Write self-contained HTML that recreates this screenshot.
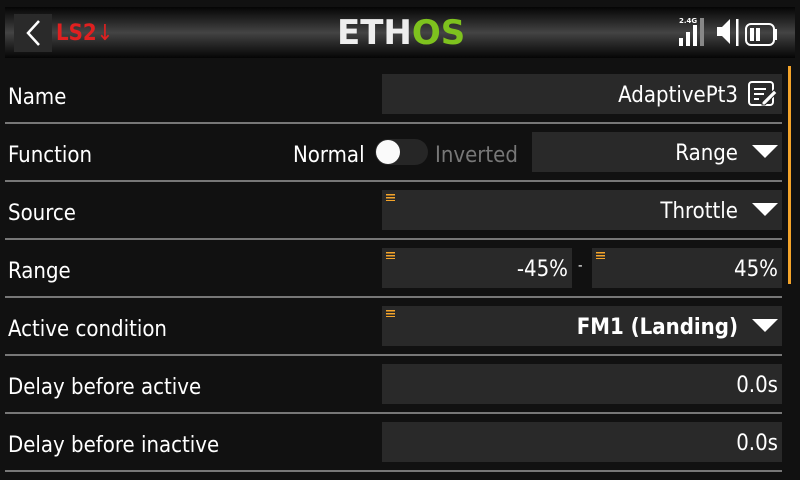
<!DOCTYPE html>
<html><head><style>
*{margin:0;padding:0;box-sizing:border-box}
body{width:800px;height:480px;background:#111;overflow:hidden;position:relative;font-family:"DejaVu Sans Condensed","DejaVu Sans",sans-serif;color:#fff;font-size:22px}
.hdr{position:absolute;left:5px;top:7px;width:790px;height:51px;background:linear-gradient(#050505,#2a2a2a 30%,#444 50%,#2a2a2a 70%,#050505)}
.back{position:absolute;left:14px;top:14px;width:38px;height:38px;background:#2a2a2a}
.sep{position:absolute;left:5px;width:777px;height:2px;background:#777}
.lbl{position:absolute;left:8px;height:40px;line-height:44px}
.fld{position:absolute;background:#292929;height:40px;line-height:43px;text-align:right;padding-right:4px}
.tri{display:inline-block;width:0;height:0;border-left:13px solid transparent;border-right:13px solid transparent;border-top:13px solid #fff;margin-left:14px;vertical-align:middle;position:relative;top:-3px}
.ham{position:absolute;left:4px;top:4px;width:9px;height:7px;background:repeating-linear-gradient(#f4a42a 0 1.5px,transparent 1.5px 3px)}
</style></head><body>
<div class="hdr"></div>
<div class="back"><svg width="38" height="38"><path d="M25 7 L14 19 L25 31" stroke="#fff" stroke-width="2.5" fill="none"/></svg></div>
<div style="position:absolute;left:56px;top:19px;color:#e02020;font-weight:bold;font-size:22px;line-height:30px">LS2<span style="font-weight:normal">↓</span></div>
<div style="position:absolute;left:337px;top:14px;font-family:'DejaVu Sans',sans-serif;font-weight:bold;font-size:34px;line-height:38px;color:#eee">ETH<span style="color:#7ec21e">OS</span></div>
<svg style="position:absolute;left:676px;top:16px" width="110" height="34">
<text x="3" y="7" fill="#fff" font-size="7" font-family="DejaVu Sans" font-weight="bold">2.4G</text>
<rect x="3" y="22" width="4" height="8" fill="#fff"/><rect x="10" y="16" width="4" height="14" fill="#fff"/><rect x="17" y="9" width="4" height="21" fill="#fff"/><rect x="24" y="2" width="4" height="28" fill="#888"/>
<path d="M41 11 h5 l8 -8 v25 l-8 -8 h-5z" fill="#fff"/><rect x="60" y="3" width="2.5" height="27" fill="#fff"/>
<rect x="70" y="8" width="28" height="21" rx="5" stroke="#fff" stroke-width="2" fill="none"/><rect x="98" y="13" width="3" height="11" fill="#fff"/><rect x="74" y="12" width="4" height="13" fill="#fff"/><rect x="80" y="12" width="4" height="13" fill="#fff"/>
</svg>
<div style="position:absolute;left:788px;top:66px;width:3px;height:218px;background:#f4a42a"></div>

<div class="lbl" style="top:76px">Name</div>
<div class="fld" style="left:382px;top:74px;width:400px;padding-right:44px">AdaptivePt3</div>
<svg style="position:absolute;left:747px;top:80px" width="32" height="28"><rect x="2" y="2" width="24" height="23" rx="3" stroke="#fff" stroke-width="2" fill="none"/><path d="M7 9h12M7 14h10M7 19h5" stroke="#fff" stroke-width="2"/><path d="M15 22 l12 -12 l3 3 l-12 12 h-3z" fill="#fff" stroke="#292929" stroke-width="1"/></svg>
<div class="sep" style="top:122px"></div>

<div class="lbl" style="top:134px">Function</div>
<div style="position:absolute;left:293px;top:134px;line-height:44px">Normal</div>
<div style="position:absolute;left:375px;top:139px;width:53px;height:26px;border-radius:13px;background:#262626"></div>
<div style="position:absolute;left:376px;top:140px;width:24px;height:24px;border-radius:12px;background:#fafafa"></div>
<div style="position:absolute;left:435px;top:134px;line-height:44px;color:#777">Inverted</div>
<div class="fld" style="left:532px;top:132px;width:250px">Range<span class="tri"></span></div>
<div class="sep" style="top:180px"></div>

<div class="lbl" style="top:192px">Source</div>
<div class="fld" style="left:382px;top:190px;width:400px"><div class="ham"></div>Throttle<span class="tri"></span></div>
<div class="sep" style="top:238px"></div>

<div class="lbl" style="top:250px">Range</div>
<div class="fld" style="left:382px;top:248px;width:190px"><div class="ham"></div>-45%</div>
<div style="position:absolute;left:578px;top:246px;line-height:40px;font-size:14px">-</div>
<div class="fld" style="left:592px;top:248px;width:190px"><div class="ham"></div>45%</div>
<div class="sep" style="top:296px"></div>

<div class="lbl" style="top:308px">Active condition</div>
<div class="fld" style="left:382px;top:306px;width:400px;font-weight:bold"><div class="ham"></div>FM1 (Landing)<span class="tri"></span></div>
<div class="sep" style="top:354px"></div>

<div class="lbl" style="top:366px">Delay before active</div>
<div class="fld" style="left:382px;top:364px;width:400px">0.0s</div>
<div class="sep" style="top:412px"></div>

<div class="lbl" style="top:424px">Delay before inactive</div>
<div class="fld" style="left:382px;top:422px;width:400px">0.0s</div>
<div class="sep" style="top:470px"></div>
</body></html>
